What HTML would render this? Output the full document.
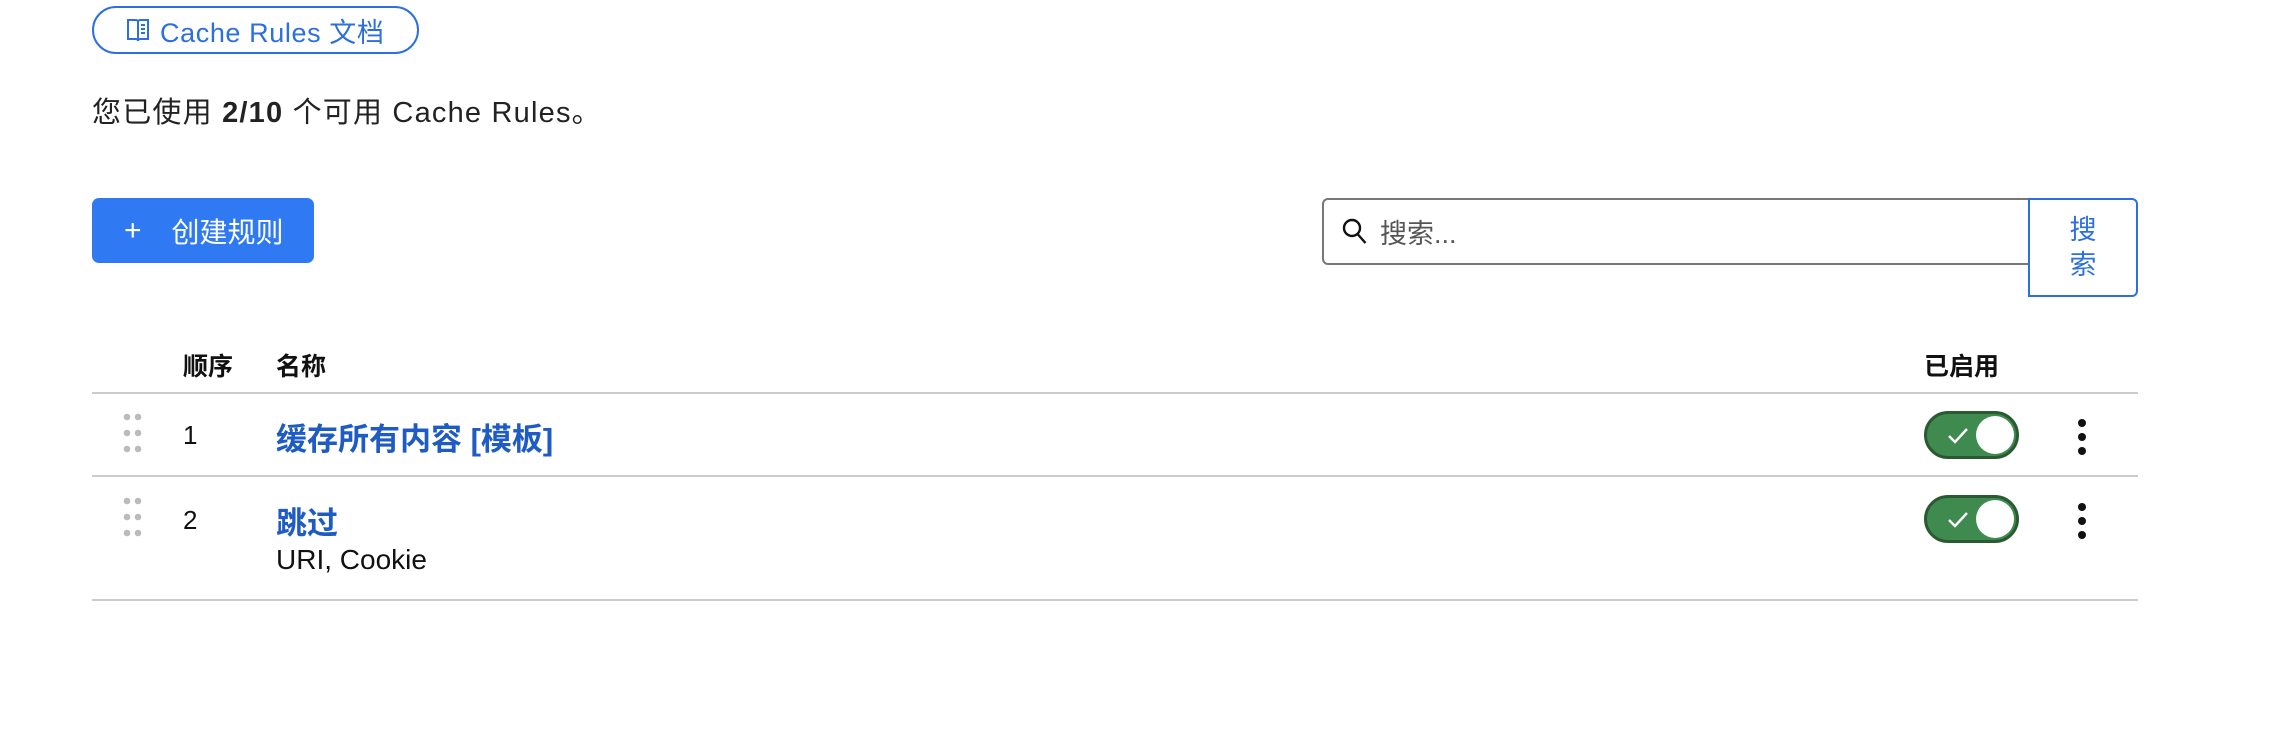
<!DOCTYPE html>
<html><head><meta charset="utf-8"><style>
*{box-sizing:border-box;margin:0;padding:0}
body{width:2280px;height:736px;background:#fff;font-family:"Liberation Sans","Noto Sans CJK SC",sans-serif;color:#222;position:relative;overflow:hidden}
.abs{position:absolute}
.doc{left:92px;top:6px;width:327px;height:48px;border:2px solid #2c6fe0;border-radius:24px;color:#2c6fe0;font-size:27px;letter-spacing:0.6px;display:flex;align-items:center;padding-left:32px;gap:10px}
.p{left:92px;top:93px;font-size:29px;line-height:40px;color:#222;letter-spacing:1.2px}
.create{left:92px;top:198px;width:222px;height:65px;background:#2f7af2;border-radius:7px;color:#fff;font-size:28px;display:flex;align-items:center;padding-left:32px}
.input{left:1322px;top:198px;width:708px;height:67px;border:2px solid #777;border-radius:6px 0 0 6px;display:flex;align-items:center;padding-left:18px;font-size:27px;color:#555;gap:12px}
.sbtn{left:2028px;top:198px;width:110px;height:99px;border:2px solid #2c6fe0;border-radius:0 6px 6px 0;color:#2c6fe0;font-size:27px;display:flex;align-items:center;justify-content:center;text-align:center;line-height:35px}
.th{top:347px;font-size:25px;font-weight:bold;color:#111}
.line{left:92px;width:2046px;height:2px;background:#ccc}
.num{left:183px;font-size:26px;color:#111}
.title{left:276px;font-size:31px;font-weight:bold;color:#1f5bc4}
.toggle{left:1924px;width:95px;height:48px;border-radius:24px;background:#3f8a4f;border:3px solid #2a5a32}
.toggle .k{position:absolute;right:2px;top:2px;width:38px;height:38px;border-radius:50%;background:#fff}
.toggle svg{position:absolute;left:20px;top:13px}
.dots{left:122px}
</style></head><body>
<div class="abs doc"><svg width="24" height="26" viewBox="0 0 24 26" fill="none" stroke="#2c6fe0" stroke-width="2"><path d="M2 3h8a2 2 0 0 1 2 2v19a2 2 0 0 0-2-2H2z"/><path d="M22 3h-8a2 2 0 0 0-2 2v19a2 2 0 0 1 2-2h8z"/><path d="M15 8h4M15 12h4M15 16h4"/></svg><span>Cache Rules 文档</span></div>
<div class="abs p">您已使用 <b>2/10</b> 个可用 Cache Rules。</div>
<div class="abs create"><span style="font-size:30px;font-weight:300;margin-right:30px">+</span>创建规则</div>
<div class="abs input"><svg width="26" height="28" viewBox="0 0 26 28" fill="none" stroke="#111" stroke-width="2.4"><circle cx="10" cy="10" r="8"/><path d="M15.5 16l8 9"/></svg><span>搜索...</span></div>
<div class="abs sbtn">搜<br>索</div>
<div class="abs th" style="left:183px">顺序</div>
<div class="abs th" style="left:276px">名称</div>
<div class="abs th" style="left:1924px">已启用</div>
<div class="abs line" style="top:392px"></div>
<div class="abs line" style="top:475px"></div>
<div class="abs line" style="top:599px"></div>

<svg class="abs dots" style="top:413px" width="20" height="44"><g fill="#bbb"><circle cx="5" cy="4" r="3.3"/><circle cx="16" cy="4" r="3.3"/><circle cx="5" cy="20" r="3.3"/><circle cx="16" cy="20" r="3.3"/><circle cx="5" cy="36" r="3.3"/><circle cx="16" cy="36" r="3.3"/></g></svg>
<div class="abs num" style="top:420px">1</div>
<div class="abs title" style="top:414px">缓存所有内容 [模板]</div>
<div class="abs toggle" style="top:411px"><svg width="22" height="18" viewBox="0 0 22 18" fill="none" stroke="#fff" stroke-width="2.4"><path d="M2 9l6 6 12-13"/></svg><div class="k"></div></div>
<svg class="abs" style="left:2076px;top:418px" width="12" height="38"><g fill="#111"><circle cx="6" cy="5" r="4"/><circle cx="6" cy="19" r="4"/><circle cx="6" cy="33" r="4"/></g></svg>

<svg class="abs dots" style="top:497px" width="20" height="44"><g fill="#bbb"><circle cx="5" cy="4" r="3.3"/><circle cx="16" cy="4" r="3.3"/><circle cx="5" cy="20" r="3.3"/><circle cx="16" cy="20" r="3.3"/><circle cx="5" cy="36" r="3.3"/><circle cx="16" cy="36" r="3.3"/></g></svg>
<div class="abs num" style="top:505px">2</div>
<div class="abs title" style="top:498px">跳过</div>
<div class="abs" style="left:276px;top:544px;font-size:28px;color:#111">URI, Cookie</div>
<div class="abs toggle" style="top:495px"><svg width="22" height="18" viewBox="0 0 22 18" fill="none" stroke="#fff" stroke-width="2.4"><path d="M2 9l6 6 12-13"/></svg><div class="k"></div></div>
<svg class="abs" style="left:2076px;top:502px" width="12" height="38"><g fill="#111"><circle cx="6" cy="5" r="4"/><circle cx="6" cy="19" r="4"/><circle cx="6" cy="33" r="4"/></g></svg>
</body></html>
